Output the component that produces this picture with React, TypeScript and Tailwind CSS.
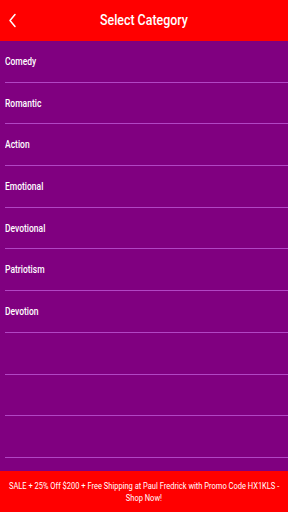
const categories = ["Comedy", "Romantic", "Action", "Emotional", "Devotional", "Patriotism", "Devotion", "", "", ""];

export default function App() {
  return (
    <div className="flex h-[512px] w-[288px] flex-col bg-[#800080] font-['Roboto',sans-serif] text-white">
      {/* Header */}
      <div className="relative flex h-[41px] shrink-0 items-center justify-center bg-[#ff0000]">
        <svg className="absolute left-[8px] top-[13px]" width="9" height="15" viewBox="0 0 9 15" fill="none">
          <path d="M7 1.5 L2 7.5 L7 13.5" stroke="#ffffff" strokeWidth="1.5" strokeLinecap="round" strokeLinejoin="round" />
        </svg>
        <h1 className="scale-x-[0.8] text-[15.5px] font-medium">Select Category</h1>
      </div>

      {/* Category list */}
      <div className="flex-1">
        {categories.map((name, i) => (
          <div key={i} className="ml-[5px] flex h-[41.7px] items-center border-b border-[#b146c4]">
            <span className="origin-left scale-x-[0.85] text-[10px] font-medium">{name}</span>
          </div>
        ))}
      </div>

      {/* Promo footer */}
      <div className="flex h-[41px] shrink-0 flex-col items-center justify-center overflow-hidden bg-[#ff0000] pt-[1px] text-center text-[9.5px] leading-[12px]">
        <span className="scale-x-[0.79] whitespace-nowrap">
          SALE + 25% Off $200 + Free Shipping at Paul Fredrick with Promo Code HX1KLS -
        </span>
        <span className="scale-x-[0.79] whitespace-nowrap">Shop Now!</span>
      </div>
    </div>
  );
}
